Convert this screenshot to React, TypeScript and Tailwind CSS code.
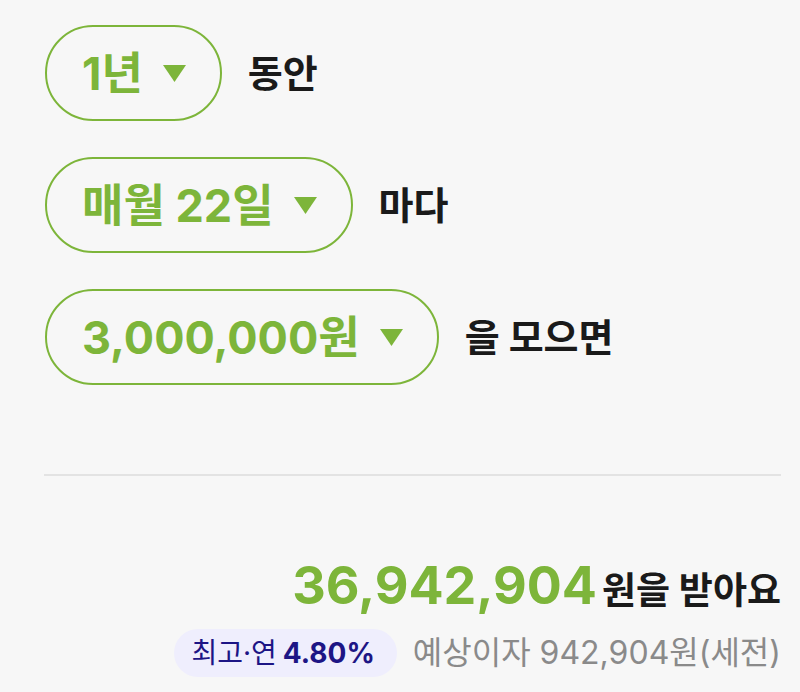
const font = { fontFamily: 'Inter, "Noto Sans CJK KR", "Noto Sans", sans-serif' };

const Caret = () => (
  <svg width="23" height="17" viewBox="0 0 23 17" className="shrink-0">
    <path d="M0 0 H23 L11.5 17 Z" fill="#7db53a" />
  </svg>
);

const Pill = ({ label, after }: { label: string; after: string }) => (
  <div className="flex items-center">
    <button className="flex items-center h-[96px] pl-[35px] pr-[34px] gap-[20px] rounded-full border-2 border-[#7db53a] bg-transparent">
      <span className="text-[45px] font-bold text-[#7db53a] leading-none">{label}</span>
      <Caret />
    </button>
    <span className="ml-[26px] text-[38px] font-bold text-[#1a1a1a] leading-none">{after}</span>
  </div>
);

const App = () => {
  return (
    <div className="w-[800px] h-[692px] bg-[#f7f7f7] overflow-hidden" style={font}>
      <div className="pl-[45px] pr-[19px] pt-[25px]">
        <div className="flex flex-col gap-[36px]">
          <Pill label="1년" after="동안" />
          <Pill label="매월 22일" after="마다" />
          <Pill label="3,000,000원" after="을 모으면" />
        </div>

        <div className="mt-[89px] h-[2px] bg-[#e3e3e3] -ml-px" />

        <div className="mt-[84px] flex flex-col items-end">
          <div className="flex items-baseline">
            <span className="text-[52px] font-bold text-[#7db53a] leading-none">36,942,904</span>
            <span className="ml-[5px] text-[37px] font-bold text-[#1a1a1a] leading-none">원을 받아요</span>
          </div>
          <div className="mt-[17px] flex items-center">
            <div className="flex items-center h-[48px] pl-[17px] pr-[22px] rounded-full bg-[#efeefd] text-[#1d1585]">
              <span className="text-[28px] leading-none">최고·연</span>
              <span className="ml-[6px] text-[28px] font-bold leading-none">4.80%</span>
            </div>
            <span className="ml-[16px] text-[32px] text-[#8a8a8a] leading-none">예상이자 942,904원(세전)</span>
          </div>
        </div>
      </div>
    </div>
  );
};

export default App;
